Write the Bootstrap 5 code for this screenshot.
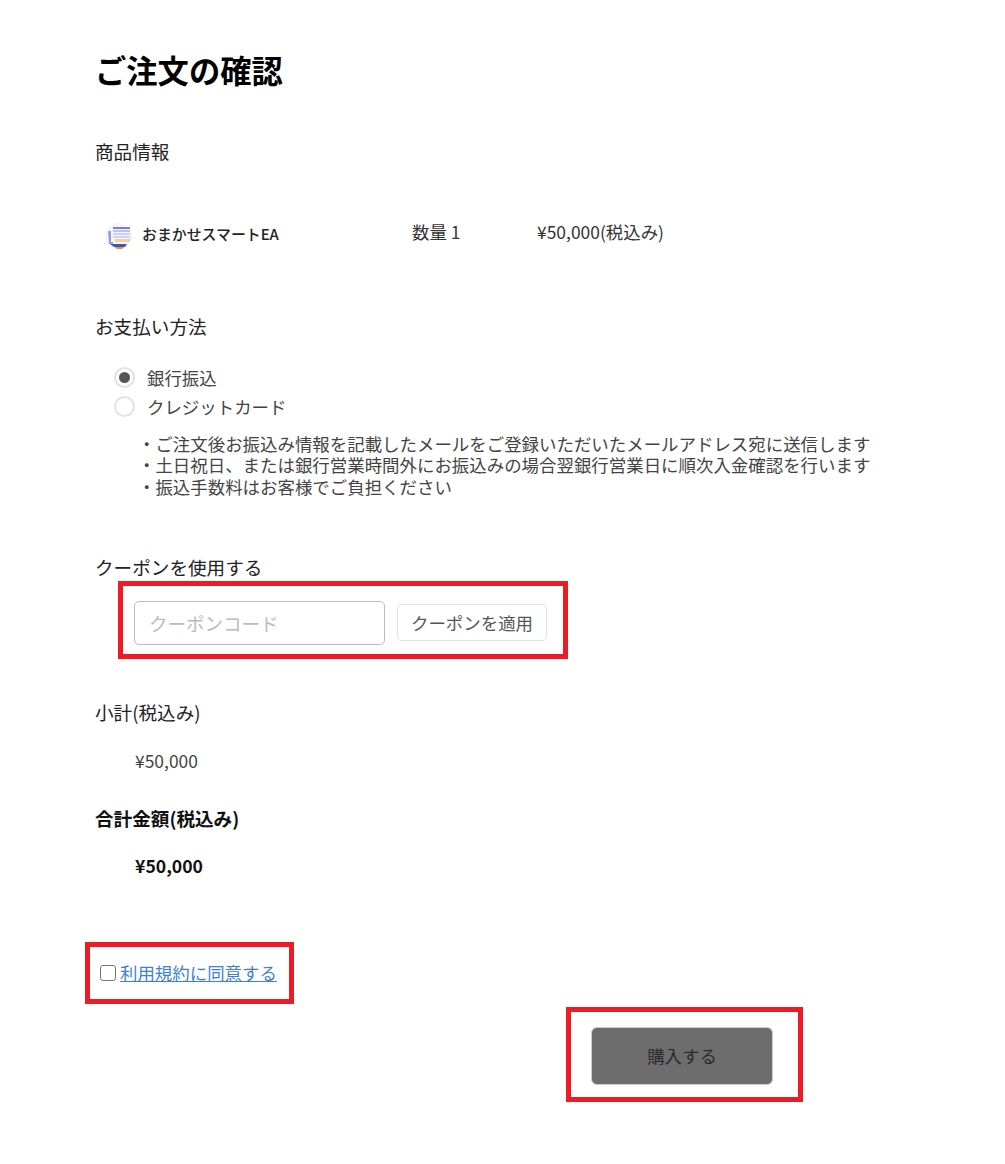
<!DOCTYPE html>
<html lang="ja">
<head>
    <meta charset="UTF-8">
    <meta name="viewport" content="width=device-width, initial-scale=1.0">
    <title>ご注文の確認</title>
    <link href="https://cdn.jsdelivr.net/npm/bootstrap@5.3.0/dist/css/bootstrap.min.css" rel="stylesheet">
    <style>
        body {
            font-family: "Noto Sans CJK JP", sans-serif;
            font-size: 17.45px;
            line-height: 1.25;
            color: #333;
            background: #fff;
        }
        .order-page {
            width: 1005px;
            height: 1164px;
            padding: 48px 0 0 95px;
            overflow: hidden;
        }
        .order-title {
            font-size: 31.3px;
            font-weight: 700;
            line-height: 44px;
            color: #000;
            margin: 0 0 46px;
        }
        .sec-label {
            font-size: 18.6px;
            line-height: 26px;
            color: #222;
            margin: 0;
        }
        .item-row {
            height: 44px;
            margin: 48px 0 57px;
            padding-left: 10px;
        }
        .item-thumb {
            width: 27px;
            height: 27px;
            margin: 4px 10px 0 0;
        }
        .item-name {
            width: 270px;
            font-size: 14.9px;
            font-weight: 500;
            color: #222;
        }
        .item-qty {
            width: 125px;
        }
        .item-qty, .item-price {
            margin-bottom: 4px;
        }
        .pay-list {
            margin: 24px 0 0 19px;
        }
        .pay-option {
            height: 29px;
            color: #444;
        }
        .pay-dot {
            width: 21px;
            height: 21px;
            border: 2px solid #e2e2e2;
            border-radius: 50%;
            margin-right: 12px;
            flex: none;
        }
        .pay-dot.is-on::after {
            content: "";
            width: 11px;
            height: 11px;
            border-radius: 50%;
            background: #555;
        }
        .pay-notes {
            margin: 12px 0 0 43px;
            line-height: 21.3px;
            color: #444;
            white-space: nowrap;
        }
        .coupon-label {
            margin-top: 58px;
            line-height: 24px;
        }
        .red-box {
            border: 5px solid #ed1c24;
        }
        .coupon-box {
            width: 450px;
            height: 78px;
            margin: 2px 0 0 23px;
            padding: 6px 0 0 11px;
        }
        .coupon-input {
            width: 251px;
            height: 44px;
            font-size: 18.5px;
            padding: 0 14px;
            border: 1.5px solid #bbb;
            border-radius: 5px;
            margin-right: 12px;
            box-shadow: none;
        }
        .coupon-input::placeholder {
            color: #bbb;
        }
        .coupon-btn {
            width: 150px;
            height: 37px;
            font-size: 17.45px;
            line-height: 1;
            padding: 0;
            color: #555;
            background: #fff;
            border: 1.5px solid #e2e2e2;
            border-radius: 4px;
        }
        .subtotal-label {
            margin-top: 40px;
        }
        .price-indent {
            margin: 23px 0 0 40px;
            line-height: 26px;
            color: #444;
        }
        .total-label {
            font-weight: 700;
            color: #111;
        }
        .total-head {
            margin-top: 31px;
        }
        .total-price {
            font-size: 17.6px;
            margin-top: 22px;
        }
        .agree-box {
            width: 209px;
            height: 62px;
            margin: 63px 0 0 -10px;
            padding-left: 10px;
        }
        .agree-check {
            width: 16px;
            height: 16px;
            border: 1.5px solid #777;
            border-radius: 3px;
            margin: 0 4px 0 0;
            appearance: none;
        }
        .agree-link {
            color: #3f7fdc;
        }
        .buy-box {
            width: 237px;
            height: 95px;
            margin: 3px 0 0 471px;
            padding: 3px 5px 0 0;
        }
        .buy-btn {
            width: 182px;
            height: 58px;
            font-size: 17.45px;
            color: #2b2b2b;
            background: #6d6d6d;
            border: 1px solid #ccc;
            border-radius: 6px;
        }
    </style>
</head>
<body>
    <div class="order-page">
        <h1 class="order-title">ご注文の確認</h1>

        <p class="sec-label">商品情報</p>
        <div class="item-row d-flex align-items-center">
            <svg class="item-thumb" viewBox="0 0 27 27">
                <circle cx="13.5" cy="13.5" r="13.5" fill="#f6f6f8"/>
                <rect x="8" y="4" width="17" height="2" fill="#6f84d8"/>
                <rect x="8" y="7" width="17" height="2" fill="#b9c4ee"/>
                <rect x="8" y="10" width="17" height="2" fill="#ccd4f2"/>
                <rect x="8" y="13" width="17" height="2" fill="#ccd4f2"/>
                <rect x="10" y="16" width="15" height="3" fill="#f3d29c"/>
                <path d="M3 8h3v11h2v2H4z" fill="#8ea2de"/>
                <path d="M5 21h17l-2 3H9z" fill="#3f55b8"/>
                <path d="M10 24h9l-2 2h-5z" fill="#e8962e"/>
            </svg>
            <span class="item-name">おまかせスマートEA</span>
            <span class="item-qty">数量 1</span>
            <span class="item-price">¥50,000(税込み)</span>
        </div>

        <p class="sec-label">お支払い方法</p>
        <div class="pay-list">
            <div class="pay-option d-flex align-items-center">
                <span class="pay-dot is-on d-flex align-items-center justify-content-center"></span>銀行振込
            </div>
            <div class="pay-option d-flex align-items-center">
                <span class="pay-dot"></span>クレジットカード
            </div>
        </div>
        <div class="pay-notes">
            ・ご注文後お振込み情報を記載したメールをご登録いただいたメールアドレス宛に送信します<br>
            ・土日祝日、または銀行営業時間外にお振込みの場合翌銀行営業日に順次入金確認を行います<br>
            ・振込手数料はお客様でご負担ください
        </div>

        <p class="sec-label coupon-label">クーポンを使用する</p>
        <div class="red-box coupon-box d-flex align-items-center">
            <input class="form-control coupon-input" type="text" placeholder="クーポンコード">
            <button class="btn coupon-btn" type="button">クーポンを適用</button>
        </div>

        <p class="sec-label subtotal-label">小計(税込み)</p>
        <p class="price-indent">¥50,000</p>
        <p class="sec-label total-label total-head">合計金額(税込み)</p>
        <p class="price-indent total-label total-price">¥50,000</p>

        <div class="red-box agree-box d-flex align-items-center">
            <input class="agree-check" type="checkbox" id="agree">
            <a class="agree-link" href="#">利用規約に同意する</a>
        </div>

        <div class="red-box buy-box d-flex align-items-center justify-content-center">
            <button class="btn buy-btn" type="button">購入する</button>
        </div>
    </div>
    <script src="https://cdn.jsdelivr.net/npm/bootstrap@5.3.0/dist/js/bootstrap.bundle.min.js"></script>
</body>
</html>
